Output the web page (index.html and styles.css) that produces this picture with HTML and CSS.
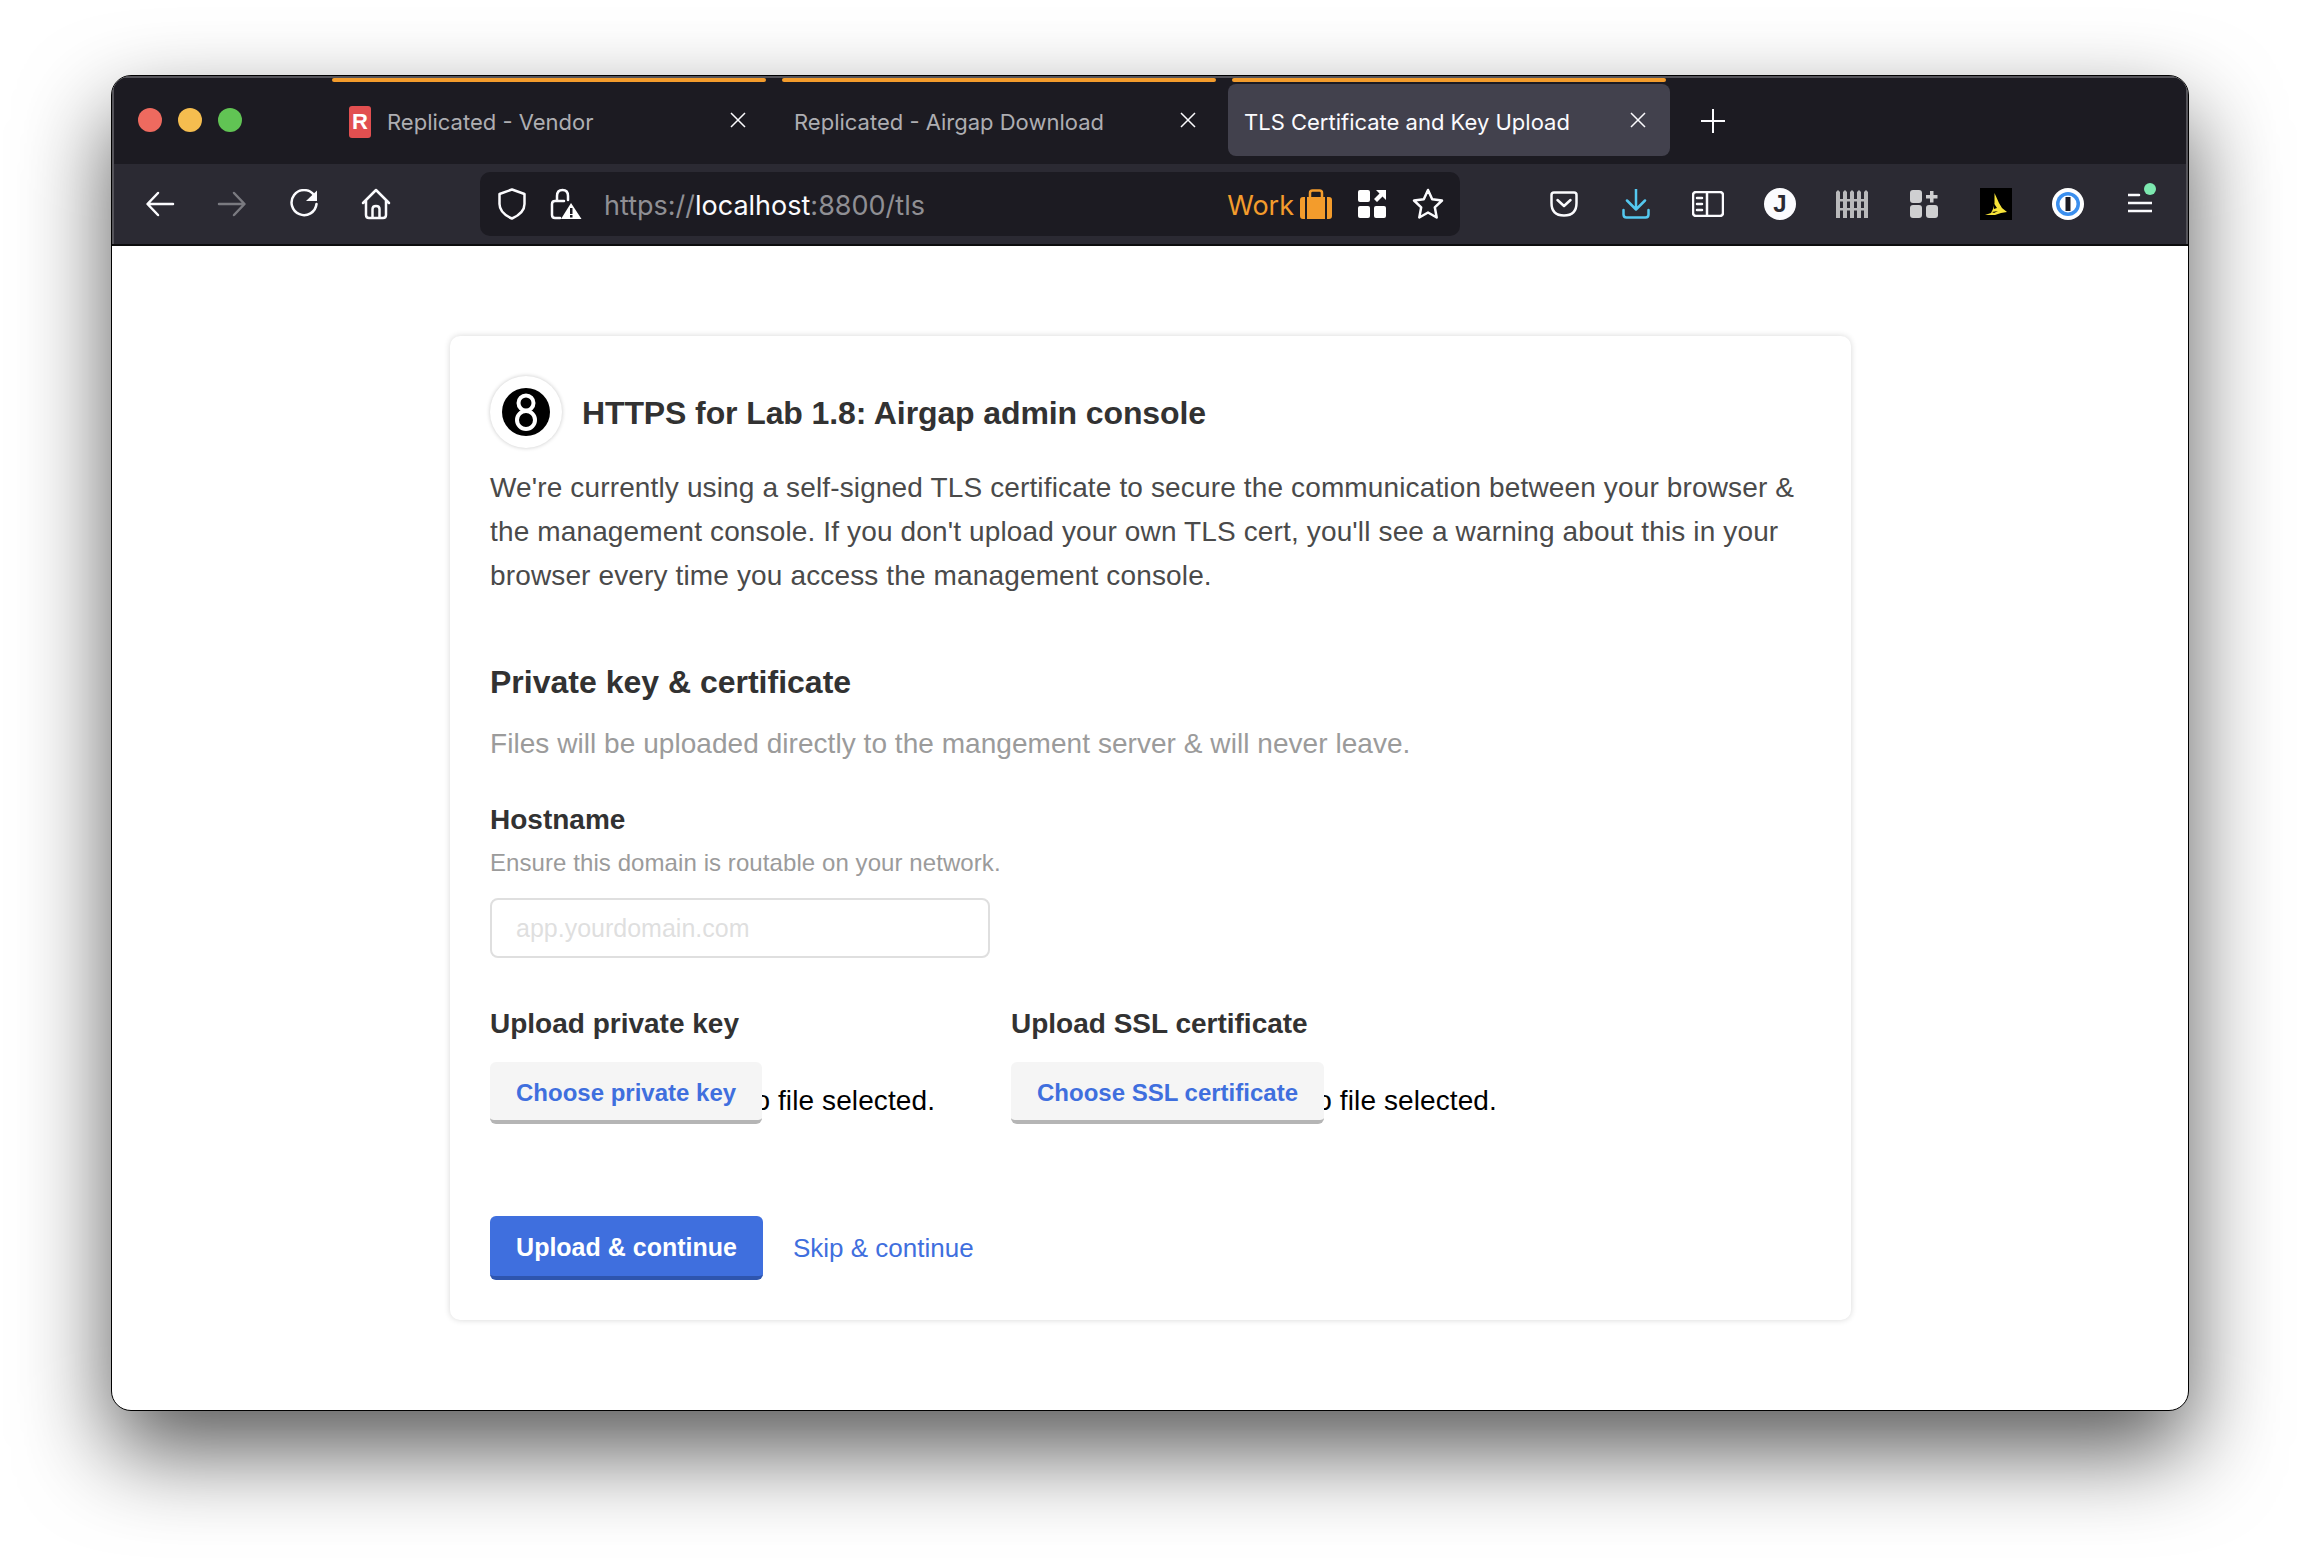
FILE: index.html
```html
<!DOCTYPE html>
<html lang="en">

<head>
    <meta charset="UTF-8">
    <meta name="viewport" content="width=device-width, initial-scale=1.0">
    <title>TLS Certificate and Key Upload</title>
    <link rel="stylesheet" href="styles.css">
</head>

<body>
    <div class="window">
        <div class="titlebar">
            <div class="lights">
                <span class="light light-red"></span>
                <span class="light light-yellow"></span>
                <span class="light light-green"></span>
            </div>
            <div class="tabs">
                <div class="tab">
                    <div class="tab-line"></div>
                    <div class="tab-body">
                        <span class="favicon">R</span>
                        <span class="tab-title">Replicated - Vendor</span>
                        <svg class="tab-close" viewBox="0 0 16 16"><path d="M1 1L15 15M15 1L1 15" /></svg>
                    </div>
                </div>
                <div class="tab">
                    <div class="tab-line"></div>
                    <div class="tab-body">
                        <span class="tab-title">Replicated - Airgap Download</span>
                        <svg class="tab-close" viewBox="0 0 16 16"><path d="M1 1L15 15M15 1L1 15" /></svg>
                    </div>
                </div>
                <div class="tab tab-active">
                    <div class="tab-line"></div>
                    <div class="tab-body">
                        <span class="tab-title">TLS Certificate and Key Upload</span>
                        <svg class="tab-close" viewBox="0 0 16 16"><path d="M1 1L15 15M15 1L1 15" /></svg>
                    </div>
                </div>
            </div>
            <svg class="new-tab" viewBox="0 0 24 24"><path d="M12 0V24M0 12H24" /></svg>
        </div>

        <div class="toolbar">
            <div class="nav-btn">
                <svg width="30" height="26" viewBox="0 0 30 26" class="line"><path d="M28 13H3M13 2L2.5 13L13 24" /></svg>
            </div>
            <div class="nav-btn nav-off">
                <svg width="30" height="26" viewBox="0 0 30 26" class="line"><path d="M2 13H27M17 2L27.5 13L17 24" /></svg>
            </div>
            <div class="nav-btn">
                <svg width="30" height="30" viewBox="0 0 30 30" class="line"><path d="M25 6A12.5 12.5 0 1 0 27.5 15" /><path class="solid" d="M17 12L28 1.500V12Z" /></svg>
            </div>
            <div class="nav-btn">
                <svg width="30" height="32" viewBox="0 0 30 32" class="line"><path d="M2 15L15 2L28 15M5 13V27Q5 30 8 30H22Q25 30 25 27V13M11.500 30V21Q11.500 18 15 18Q18.500 18 18.500 21V30" /></svg>
            </div>

            <div class="urlbar">
                <svg class="url-shield line" width="28" height="32" viewBox="0 0 28 32"><path d="M14 1.500L26.500 6V16Q26.500 25 14 30.500Q1.500 25 1.500 16V6Z" /></svg>
                <svg class="url-lock" width="32" height="32" viewBox="0 0 32 32">
                    <path class="line-path" d="M7 12V8Q7 2 12.500 2Q18 2 18 8V12M14 13H5Q2 13 2 16V27Q2 30 5 30H10" />
                    <path d="M21 15L31.500 31H11Z" fill="#fff" />
                    <rect x="20" y="20" width="2.500" height="6" fill="#1c1b22" />
                    <rect x="20" y="27" width="2.500" height="2.500" fill="#1c1b22" />
                </svg>
                <div class="url-text">https://<span class="url-host">localhost</span>:8800/tls</div>
                <span class="url-work">Work</span>
                <svg class="url-case" width="32" height="30" viewBox="0 0 32 30">
                    <path d="M10 8V4Q10 1.500 12.500 1.500H19.500Q22 1.500 22 4V8" fill="none" stroke="#f39c2c" stroke-width="2.500" />
                    <rect x="7" y="8" width="18" height="22" fill="#f39c2c" />
                    <path d="M3 8H5V30H3Q0 30 0 27V11Q0 8 3 8ZM27 8H29Q32 8 32 11V27Q32 30 29 30H27Z" fill="#f39c2c" />
                </svg>
                <svg class="url-grid" width="28" height="28" viewBox="0 0 28 28" fill="#fff">
                    <rect width="12" height="12" rx="2" />
                    <rect y="16" width="12" height="12" rx="2" />
                    <rect x="16" y="16" width="12" height="12" rx="2" />
                    <path d="M18 0H28V10L24.500 6.500L19 12L16 9L21.500 3.500Z" />
                </svg>
                <svg class="url-star line" width="32" height="32" viewBox="0 0 32 32"><path d="M16 2L20.200 11.200L30 12.500L22.800 19.300L24.700 29.500L16 24.500L7.300 29.500L9.200 19.300L2 12.500L11.800 11.200Z" /></svg>
            </div>

            <div class="tools">
                <div class="tool">
                    <svg width="28" height="26" viewBox="0 0 28 26" class="line"><path d="M4 1.500H24Q26.500 1.500 26.500 4V12Q26.500 24.500 14 24.500Q1.500 24.500 1.500 12V4Q1.500 1.500 4 1.500ZM7.500 9L14 15L20.500 9" /></svg>
                </div>
                <div class="tool">
                    <svg width="28" height="30" viewBox="0 0 28 30" class="line line-blue"><path d="M14 0V20M5 11.500L14 20.500L23 11.500M1.500 21V25.500Q1.500 28.500 4.500 28.500H23.500Q26.500 28.500 26.500 25.500V21" /></svg>
                </div>
                <div class="tool">
                    <svg width="32" height="26" viewBox="0 0 32 26" class="line"><rect x="1" y="1" width="30" height="24" rx="3" /><path d="M15 1V25M5 7H10M5 13H10M5 19H10" /></svg>
                </div>
                <div class="tool">
                    <span class="avatar">J</span>
                </div>
                <div class="tool">
                    <svg width="32" height="28" viewBox="0 0 32 28" fill="#b9b9bb">
                        <path d="M0 2L2 0L4 2V28H0ZM7 2L9 0L11 2V28H7ZM14 2L16 0L18 2V28H14ZM21 2L23 0L25 2V28H21ZM28 2L30 0L32 2V28H28Z" />
                        <rect y="9" width="32" height="2.500" />
                        <rect y="18" width="32" height="2.500" />
                    </svg>
                </div>
                <div class="tool">
                    <svg width="28" height="28" viewBox="0 0 28 28" fill="#cfcfd1">
                        <rect y="0" width="12" height="13" rx="3" />
                        <rect y="15" width="12" height="13" rx="3" />
                        <rect x="16" y="15" width="12" height="13" rx="3" />
                        <path d="M20 1H23.500V5H27.500V8.500H23.500V12.500H20V8.500H16V5H20Z" />
                    </svg>
                </div>
                <div class="tool">
                    <svg width="32" height="32" viewBox="0 0 32 32">
                        <rect width="32" height="32" fill="#000" />
                        <path d="M14.500 5L19 15L22 20L27 24L21 25L15 27L5 27L11 25L13 21L14.500 15Z" fill="#f7e339" />
                        <path d="M13 14L17 20L14 21ZM12 24L18 23L14 25Z" fill="#000" />
                    </svg>
                </div>
                <div class="tool">
                    <svg width="32" height="32" viewBox="0 0 32 32">
                        <circle cx="16" cy="16" r="16" fill="#fff" />
                        <circle cx="16" cy="16" r="12" fill="#3b8fee" />
                        <circle cx="16" cy="16" r="8.500" fill="#fff" />
                        <rect x="13.500" y="9" width="5" height="14" fill="#1c1b22" />
                    </svg>
                </div>
                <div class="tool tool-menu">
                    <svg width="24" height="20" viewBox="0 0 24 20" class="menu-lines"><path d="M0 2H11M0 10H24M0 18H24" /></svg>
                    <span class="menu-dot"></span>
                </div>
            </div>
        </div>

        <div class="page">
            <div class="card">
                <div class="card-head">
                    <div class="app-icon">
                        <svg width="48" height="48" viewBox="0 0 48 48">
                            <circle cx="24" cy="24" r="24" fill="#000" />
                            <circle cx="24" cy="15" r="7.500" fill="#000" stroke="#fff" stroke-width="4" />
                            <circle cx="24" cy="32" r="9" fill="#000" stroke="#fff" stroke-width="4" />
                        </svg>
                    </div>
                    <h1 class="card-title">HTTPS for Lab 1.8: Airgap admin console</h1>
                </div>
                <p class="intro">We're currently using a self-signed TLS certificate to secure the communication between your browser &amp; the management console. If you don't upload your own TLS cert, you'll see a warning about this in your browser every time you access the management console.</p>

                <h2 class="section-title">Private key &amp; certificate</h2>
                <p class="section-sub">Files will be uploaded directly to the mangement server &amp; will never leave.</p>

                <div class="field-label">Hostname</div>
                <div class="field-hint">Ensure this domain is routable on your network.</div>
                <input class="text-input" type="text" placeholder="app.yourdomain.com">

                <div class="uploads">
                    <div class="upload">
                        <div class="upload-label">Upload private key</div>
                        <div class="file-row">
                            <button class="btn btn-secondary" type="button">Choose private key</button>
                            <span class="no-file">No file selected.</span>
                        </div>
                    </div>
                    <div class="upload">
                        <div class="upload-label">Upload SSL certificate</div>
                        <div class="file-row">
                            <button class="btn btn-secondary" type="button">Choose SSL certificate</button>
                            <span class="no-file">No file selected.</span>
                        </div>
                    </div>
                </div>

                <div class="actions">
                    <button class="btn btn-primary" type="button">Upload &amp; continue</button>
                    <a class="skip-link" href="#">Skip &amp; continue</a>
                </div>
            </div>
        </div>
    </div>
</body>

</html>
```

FILE: styles.css
```css
* {
    margin: 0;
    padding: 0;
    box-sizing: border-box;
}

body {
    background: #fff;
    overflow: hidden;
    height: 1558px;
    font-family: "Liberation Sans", Arial, sans-serif;
}

.window {
    width: 2078px;
    height: 1336px;
    margin: 75px 0 0 111px;
    border-radius: 20px;
    overflow: hidden;
    background: #fff;
    border: 1px solid #000;
    box-shadow: 0 40px 90px rgba(0, 0, 0, 0.65);
}

.titlebar {
    display: flex;
    height: 88px;
    background: #1c1b22;
    border-top: 2px solid #55545a;
    box-shadow: inset 2px 0 0 #55545a, inset -2px 0 0 #55545a;
    font-family: Inter, "Noto Sans", sans-serif;
}

.lights {
    display: flex;
    gap: 16px;
    width: 216px;
    padding: 30px 0 0 26px;
}

.light {
    width: 24px;
    height: 24px;
    border-radius: 50%;
}

.light-red {
    background: #ee6a5f;
}

.light-yellow {
    background: #f5bd4f;
}

.light-green {
    background: #61c454;
}

.tabs {
    display: flex;
    gap: 8px;
}

.tab {
    width: 442px;
}

.tab-line {
    height: 4px;
    margin: 0 4px;
    background: #f39c2c;
    border-radius: 2px;
}

.tab-body {
    display: flex;
    align-items: center;
    height: 72px;
    margin-top: 2px;
    padding: 3px 24px 0 16px;
    border-radius: 8px;
    color: #aeaeb2;
    font-size: 22px;
}

.tab-active .tab-body {
    background: #42414d;
    color: #fbfbfe;
}

.favicon {
    display: flex;
    align-items: center;
    justify-content: center;
    width: 22px;
    height: 32px;
    margin: 0 16px 0 5px;
    border-radius: 3px;
    background: #e24f50;
    color: #fff;
    font-family: "Liberation Sans", sans-serif;
    font-size: 22px;
    font-weight: 700;
}

.tab-close {
    width: 16px;
    height: 16px;
    margin-left: auto;
    margin-top: -3px;
    fill: none;
    stroke: #fbfbfe;
    stroke-width: 1.500;
}

.new-tab {
    width: 24px;
    height: 24px;
    margin: 31px 0 0 31px;
    fill: none;
    stroke: #fbfbfe;
    stroke-width: 2;
}

.toolbar {
    display: flex;
    align-items: center;
    height: 82px;
    background: #2b2a33;
    border-bottom: 2px solid #0c0c0d;
    box-shadow: inset 2px 0 0 #55545a, inset -2px 0 0 #55545a;
}

.line {
    fill: none;
    stroke: #fbfbfe;
    stroke-width: 2.500;
    stroke-linecap: round;
    stroke-linejoin: round;
}

.line .solid {
    fill: #fbfbfe;
    stroke: none;
}

.line-blue {
    stroke: #54c8f0;
}

.line-path {
    fill: none;
    stroke: #fbfbfe;
    stroke-width: 2.500;
    stroke-linecap: round;
}

.nav-btn {
    display: flex;
    flex: none;
    justify-content: center;
    width: 48px;
    margin-right: 24px;
}

.nav-btn:first-child {
    margin-left: 24px;
}

.nav-off svg {
    stroke: #7a7a80;
}

.urlbar {
    display: flex;
    flex: none;
    align-items: center;
    width: 980px;
    height: 64px;
    margin-left: 56px;
    padding: 0 0 0 18px;
    border-radius: 10px;
    background: #1c1b22;
    font-family: Inter, "Noto Sans", sans-serif;
}

.url-lock {
    margin-left: 24px;
}

.url-text {
    margin-left: 22px;
    padding-top: 2px;
    flex: 1;
    color: #8f8f94;
    font-size: 27px;
}

.url-host {
    color: #fbfbfe;
}

.url-work {
    padding-top: 2px;
    color: #f39c2c;
    font-size: 27px;
}

.url-case {
    margin-left: 6px;
}

.url-grid {
    margin-left: 26px;
}

.url-star {
    margin-left: 26px;
    margin-right: 16px;
}

.tools {
    display: flex;
    flex: none;
    gap: 40px;
    margin-left: 88px;
}

.tool {
    display: flex;
    align-items: center;
    justify-content: center;
    position: relative;
    width: 32px;
    height: 32px;
}

.avatar {
    display: flex;
    align-items: center;
    justify-content: center;
    width: 32px;
    height: 32px;
    border-radius: 50%;
    background: #fbfbfe;
    color: #2b2a33;
    font-family: "Liberation Sans", sans-serif;
    font-size: 24px;
    font-weight: 700;
}

.menu-lines {
    margin-top: -2px;
    fill: none;
    stroke: #fbfbfe;
    stroke-width: 2.500;
    stroke-linecap: round;
}

.menu-dot {
    position: absolute;
    top: -5px;
    right: 0;
    width: 12px;
    height: 12px;
    border-radius: 50%;
    background: #7de8b0;
}

.page {
    padding: 90px 0 0 1px;
}

.card {
    width: 1401px;
    margin: 0 auto;
    padding: 40px;
    border-radius: 10px;
    background: #fff;
    box-shadow: 0 0 6px rgba(0, 0, 0, 0.16);
}

.card-head {
    display: flex;
    align-items: center;
    gap: 20px;
}

.app-icon {
    display: flex;
    align-items: center;
    justify-content: center;
    width: 72px;
    height: 72px;
    border-radius: 50%;
    box-shadow: 0 0 4px rgba(0, 0, 0, 0.22);
}

.card-title {
    padding-top: 2px;
    color: #323232;
    font-size: 32px;
    line-height: 40px;
    letter-spacing: -0.11px;
}

.intro {
    margin-top: 18px;
    color: #4a4a4a;
    font-size: 28px;
    line-height: 44px;
    letter-spacing: 0.14px;
}

.section-title {
    margin-top: 64px;
    color: #323232;
    font-size: 32px;
    line-height: 40px;
}

.section-sub {
    margin-top: 20px;
    color: #9b9b9b;
    font-size: 28px;
    line-height: 44px;
    letter-spacing: 0.05px;
}

.field-label {
    margin-top: 36px;
    color: #323232;
    font-size: 28px;
    font-weight: 700;
    line-height: 36px;
}

.field-hint {
    margin-top: 9px;
    color: #9b9b9b;
    font-size: 24px;
    line-height: 32px;
    letter-spacing: 0.08px;
}

.text-input {
    display: block;
    width: 500px;
    height: 60px;
    margin-top: 19px;
    padding: 0 24px;
    border: 2px solid #dfdfdf;
    border-radius: 8px;
    outline: none;
    font-family: inherit;
    font-size: 25px;
}

.text-input::placeholder {
    color: #dfdfdf;
    opacity: 1;
}

.uploads {
    display: flex;
    margin-top: 48px;
}

.upload {
    width: 521px;
}

.upload-label {
    color: #323232;
    font-size: 28px;
    font-weight: 700;
    line-height: 36px;
}

.file-row {
    display: flex;
    align-items: flex-start;
    margin-top: 20px;
}

.btn {
    position: relative;
    z-index: 1;
    border: 0;
    border-radius: 6px;
    font-family: inherit;
    font-weight: 700;
}

.btn-secondary {
    height: 62px;
    padding: 4px 26px 0 26px;
    background: #f5f5f5;
    border-bottom: 4px solid #b5b5b5;
    color: #3f6fde;
    font-size: 24px;
}

.no-file {
    margin: 21px 0 0 -28px;
    color: #000;
    font-size: 28px;
    line-height: 36px;
    letter-spacing: 0.1px;
    white-space: nowrap;
}

.actions {
    display: flex;
    align-items: center;
    gap: 30px;
    margin-top: 92px;
}

.btn-primary {
    width: 273px;
    height: 64px;
    padding-top: 3px;
    background: #3f6fde;
    border-bottom: 4px solid #2e55ae;
    color: #fff;
    font-size: 25px;
}

.skip-link {
    color: #3f6fde;
    font-size: 26px;
    text-decoration: none;
}
```
